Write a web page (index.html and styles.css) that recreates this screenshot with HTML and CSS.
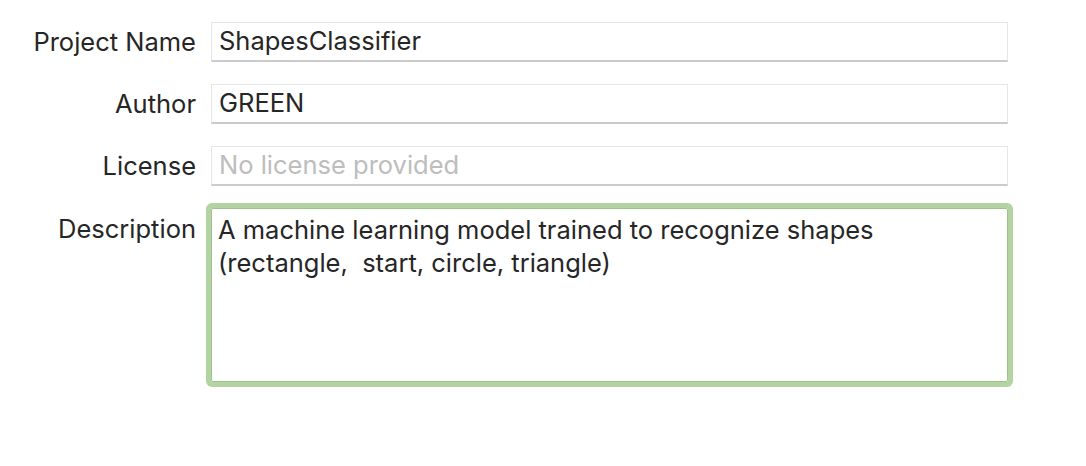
FILE: index.html
```html
<!DOCTYPE html>
<html>
<head>
<meta charset="utf-8">
<link rel="stylesheet" href="styles.css">
</head>
<body>
<div class="form">
  <div class="label">Project Name</div>
  <div class="field">ShapesClassifier</div>
  <div class="label">Author</div>
  <div class="field">GREEN</div>
  <div class="label">License</div>
  <div class="field placeholder">No license provided</div>
  <div class="label label-top">Description</div>
  <div class="area">A machine learning model trained to recognize shapes<br>(rectangle,&nbsp; start, circle, triangle)</div>
</div>
</body>
</html>
```
FILE: styles.css
```css
html, body {
  margin: 0;
  padding: 0;
  background: #ffffff;
}
body {
  font-family: Inter, "Liberation Sans", Arial, sans-serif;
  font-size: 25.5px;
  color: #262626;
}
.form {
  display: grid;
  grid-template-columns: 196px 797px;
  column-gap: 15px;
  row-gap: 22px;
  padding-top: 22px;
  padding-bottom: 60px;
  align-items: center;
}
.label {
  text-align: right;
  white-space: nowrap;
  line-height: 36px;
}
.label-top {
  align-self: start;
  padding-top: 3px;
}
.field {
  box-sizing: border-box;
  height: 40px;
  border: 1px solid #e6e6e6;
  border-bottom: 2px solid #cbcbcb;
  padding: 0 7px;
  line-height: 36px;
  white-space: nowrap;
}
.placeholder {
  color: #bdbdbd;
}
.area {
  box-sizing: border-box;
  height: 174px;
  border: 1px solid #9cc48a;
  border-radius: 2px;
  box-shadow: 0 0 0 5px #b3d4a2;
  padding: 4px 6px;
  line-height: 33px;
}
```
